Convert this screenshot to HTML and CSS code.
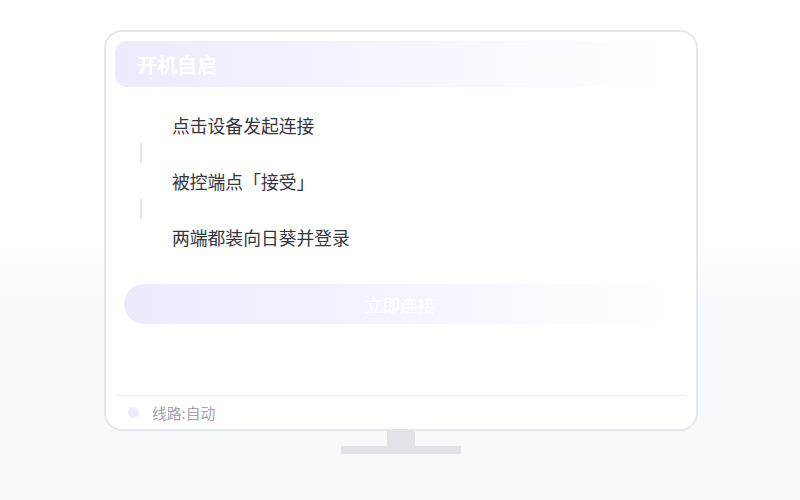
FILE: index.html
```html
<!DOCTYPE html>
<html lang="zh">
<head>
<meta charset="utf-8">
<link rel="stylesheet" href="styles.css">
</head>
<body>
<div class="stage">
  <div class="monitor">
    <div class="screen">
      <div class="header">
        <span class="title">开机自启</span>
        <span class="dots"><i></i><i></i><i></i></span>
      </div>
      <div class="steps">
        <div class="step">点击设备发起连接</div>
        <div class="sep"></div>
        <div class="step">被控端点「接受」</div>
        <div class="sep"></div>
        <div class="step">两端都装向日葵并登录</div>
      </div>
      <div class="btn-row">
        <div class="btn">立即连接</div>
      </div>
      <div class="spacer"></div>
      <div class="footer">
        <span class="dot"></span>
        <span class="route">线路:自动</span>
      </div>
    </div>
    <div class="neck"></div>
    <div class="base"></div>
  </div>
</div>
</body>
</html>
```
FILE: styles.css
```css
* { box-sizing: border-box; }
html, body { margin: 0; padding: 0; }
body {
  width: 800px;
  height: 500px;
  overflow: hidden;
  font-family: "Noto Sans CJK SC", "Noto Sans", sans-serif;
  background: linear-gradient(to bottom, #ffffff 0px, #ffffff 245px, #f8f9fb 300px, #f8f9fb 100%);
}
.stage {
  display: flex;
  justify-content: center;
  padding-top: 30px;
}
.monitor {
  display: flex;
  flex-direction: column;
  align-items: center;
  width: 594px;
  margin-left: 2px;
}
.screen {
  width: 594px;
  height: 401px;
  border: 2px solid #e4e7ec;
  border-radius: 18px;
  background: #fff;
  display: flex;
  flex-direction: column;
  padding: 9px 10px 0 9px;
}
.header {
  height: 46px;
  border-radius: 12px;
  background: linear-gradient(to right, rgba(236,232,254,0.9) 0%, rgba(243,240,254,0.8) 45%, rgba(255,255,255,0) 100%);
  display: flex;
  align-items: center;
  justify-content: space-between;
  padding: 0 16px 0 22px;
  margin-right: 14px;
}
.title {
  color: #fff;
  font-size: 20px;
  font-weight: 700;
}
.dots { display: flex; gap: 5px; }
.dots i {
  width: 4px; height: 4px; border-radius: 50%;
  background: #fff;
  display: block;
}
.steps {
  padding-top: 25px;
  padding-left: 57px;
  display: flex;
  flex-direction: column;
}
.step {
  height: 26px;
  line-height: 26px;
  font-size: 17.8px;
  color: #33363c;
}
.sep {
  height: 30px;
}
.sep::before {
  content: "";
  display: block;
  width: 2px;
  height: 20px;
  background: #e3e5ea;
  margin-left: -32px;
  margin-top: 5px;
}
.btn-row {
  padding-top: 34px;
  padding-left: 9px;
}
.btn {
  width: 552px;
  height: 40px;
  border-radius: 20px;
  background: linear-gradient(to right, rgba(238,234,254,1) 0%, rgba(244,241,254,0.9) 45%, rgba(255,255,255,0) 100%);
  color: #fff;
  font-size: 17.5px;
  display: flex;
  align-items: center;
  justify-content: center;
}
.spacer { flex: 1; }
.footer {
  margin: 0 0 0 1px;
  border-top: 1px solid #eceef2;
  height: 34px;
  display: flex;
  align-items: center;
  padding-left: 12px;
}
.dot {
  width: 11px; height: 11px; border-radius: 50%;
  background: #eeeafd;
  margin-right: 13px;
}
.route {
  font-size: 14.8px;
  color: #9fa3aa;
}
.neck {
  width: 28px;
  height: 15px;
  background: #e0e3e8;
}
.base {
  width: 120px;
  height: 8px;
  background: #e0e3e8;
}
```
